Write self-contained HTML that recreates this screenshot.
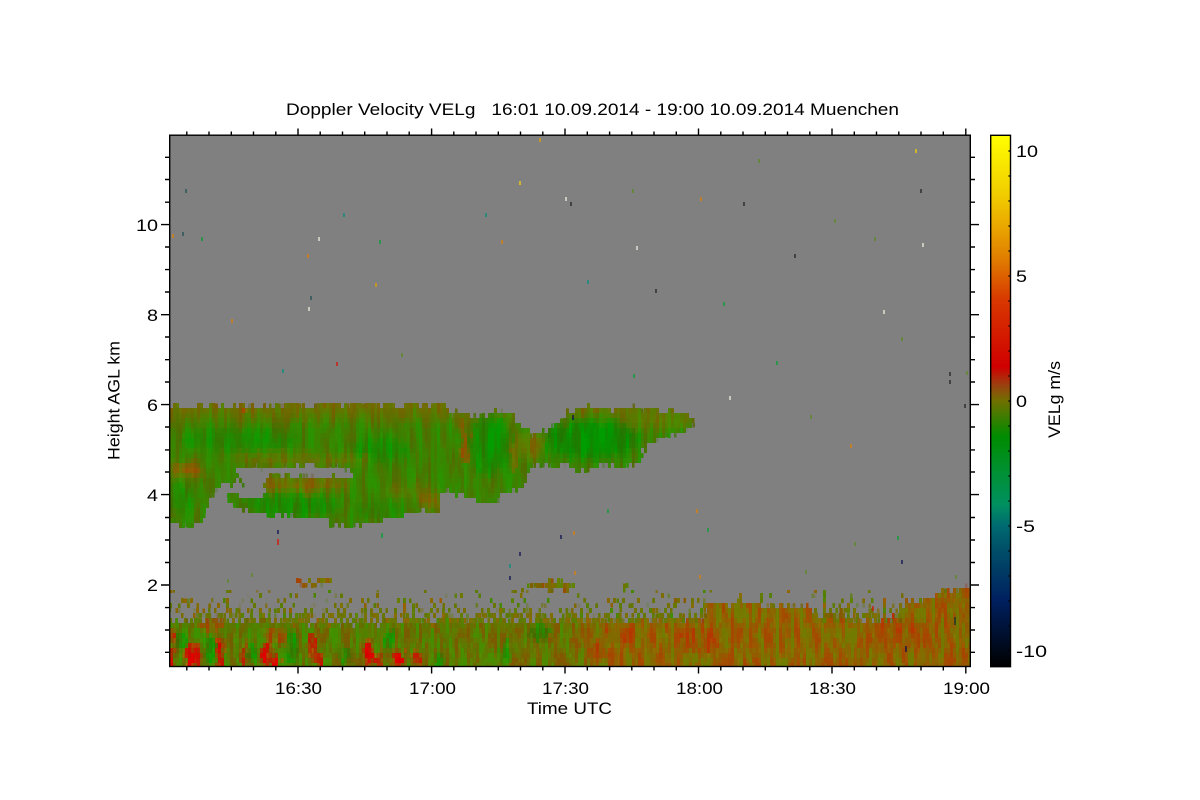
<!DOCTYPE html>
<html><head><meta charset="utf-8"><title>Doppler Velocity VELg</title>
<style>html,body{margin:0;padding:0;background:#fff}svg{display:block}
text{font-family:"Liberation Sans",sans-serif;font-size:17px;fill:#000}</style></head>
<body>
<svg width="1200" height="800" viewBox="0 0 1200 800" xmlns="http://www.w3.org/2000/svg">
<defs>
<clipPath id="plot"><rect x="170" y="135" width="800" height="531"/></clipPath>
<linearGradient id="cb" gradientUnits="userSpaceOnUse" x1="0" y1="135" x2="0" y2="667">
<stop offset="0" stop-color="#ffff00"/><stop offset=".122" stop-color="#f0c800"/><stop offset=".235" stop-color="#e07c00"/><stop offset=".31" stop-color="#d83800"/><stop offset=".436" stop-color="#d00000"/><stop offset=".47" stop-color="#9a4010"/><stop offset=".5" stop-color="#707000"/><stop offset=".566" stop-color="#008c00"/><stop offset=".63" stop-color="#009030"/><stop offset=".695" stop-color="#009060"/><stop offset=".735" stop-color="#006a70"/><stop offset=".78" stop-color="#004f68"/><stop offset=".874" stop-color="#002060"/><stop offset="1" stop-color="#000000"/>
</linearGradient>
<linearGradient id="bl" gradientUnits="userSpaceOnUse" x1="170" y1="0" x2="970" y2="0">
<stop offset="0" stop-color="#557800"/><stop offset=".17" stop-color="#5a7600"/><stop offset=".35" stop-color="#5e7400"/><stop offset=".49" stop-color="#687000"/><stop offset=".56" stop-color="#8c6000"/><stop offset=".8" stop-color="#8a6200"/><stop offset="1" stop-color="#8c5e00"/>
</linearGradient>
<linearGradient id="sp" gradientUnits="userSpaceOnUse" x1="0" y1="592" x2="0" y2="626">
<stop offset="0" stop-color="#000" stop-opacity="0"/><stop offset=".4" stop-color="#000" stop-opacity=".35"/><stop offset="1" stop-color="#000" stop-opacity="1"/>
</linearGradient>
<linearGradient id="topb" gradientUnits="userSpaceOnUse" x1="0" y1="403" x2="0" y2="428">
<stop offset="0" stop-color="#7a6800" stop-opacity=".9"/><stop offset="1" stop-color="#7a6800" stop-opacity="0"/>
</linearGradient>
<clipPath id="cloudclip"><polygon points="170,405 240,406 300,405 350,404 445,405 450,414 460,412 478,417 490,415 495,410 515,414 520,424 530,432 545,432 555,425 570,412 585,409 620,408 650,410 680,413 692,418 696,428 685,430 670,437 655,440 645,450 642,460 630,465 615,467 600,465 590,469 575,469 565,465 555,466 535,463 530,475 525,483 518,490 505,495 495,502 480,502 470,497 455,493 440,490 438,513 425,513 417,513 397,517 357,528 320,520 283,515 250,514 233,508 226,500 232,493 244,497 250,500 262,497 270,490 258,488 270,477 290,477 352,478 347,467 313,465 275,468 232,467 238,472 243,481 223,485 210,497 213,503 205,513 203,524 150,524 150,405"/></clipPath>
<filter id="soft" x="-30%" y="-30%" width="160%" height="160%"><feGaussianBlur stdDeviation="4"/></filter>
<filter id="soft2" x="-60%" y="-30%" width="220%" height="160%"><feGaussianBlur stdDeviation="1.2"/></filter>

<filter id="cloudF" filterUnits="userSpaceOnUse" x="150" y="390" width="570" height="150" color-interpolation-filters="sRGB">
<feTurbulence type="fractalNoise" baseFrequency="0.2 0.06" numOctaves="2" seed="4" result="jit"/>
<feDisplacementMap in="SourceGraphic" in2="jit" scale="14" xChannelSelector="R" yChannelSelector="G" result="disp"/>
<feTurbulence type="fractalNoise" baseFrequency="0.16 0.022" numOctaves="3" seed="11"/>
<feColorMatrix type="matrix" values="2.5 0 0 0 -.75  -2.5 0 0 0 1.75  0 0 0 0 0  0 0 0 0 1" result="noise"/>
<feComposite in="disp" in2="noise" operator="arithmetic" k1="0" k2="1" k3=".15" k4="-.075"/>
<feComposite in2="disp" operator="in" result="col"/>
<feFlood x="150" y="390" width="1" height="1" flood-color="#000" result="d"/>
<feComposite in="d" in2="d" x="150" y="390" width="3" height="5" operator="over"/>
<feTile x="150" y="390" width="570" height="150" result="tile"/>
<feComposite in="col" in2="tile" operator="in"/>
<feMorphology operator="dilate" radius="1 2"/>
</filter>

<filter id="blF" filterUnits="userSpaceOnUse" x="150" y="570" width="840" height="110" color-interpolation-filters="sRGB">
<feTurbulence type="fractalNoise" baseFrequency="0.25 0.08" numOctaves="2" seed="7" result="jit"/>
<feDisplacementMap in="SourceGraphic" in2="jit" scale="14" xChannelSelector="R" yChannelSelector="G" result="disp"/>
<feTurbulence type="fractalNoise" baseFrequency="0.2 0.04" numOctaves="3" seed="23"/>
<feColorMatrix type="matrix" values="3 0 0 0 -1  -3 0 0 0 2  0 0 0 0 0  0 0 0 0 1" result="noise"/>
<feComposite in="disp" in2="noise" operator="arithmetic" k1="0" k2="1" k3=".2" k4="-.1"/>
<feComposite in2="disp" operator="in" result="col"/>
<feFlood x="150" y="570" width="1" height="1" flood-color="#000" result="d"/>
<feComposite in="d" in2="d" x="150" y="570" width="3" height="5" operator="over"/>
<feTile x="150" y="570" width="840" height="110" result="tile"/>
<feComposite in="col" in2="tile" operator="in"/>
<feMorphology operator="dilate" radius="1 2"/>
</filter>

<filter id="spF" filterUnits="userSpaceOnUse" x="170" y="590" width="800" height="46" color-interpolation-filters="sRGB">
<feTurbulence type="fractalNoise" baseFrequency="0.3 0.18" numOctaves="2" seed="31" result="t"/>
<feColorMatrix in="t" type="matrix" values="0 0 0 0 0  0 0 0 0 0  0 0 0 0 0  1 0 0 0 0" result="na"/>
<feComposite in="SourceAlpha" in2="na" operator="arithmetic" k1="0" k2=".3" k3="1" k4="0"/>
<feComponentTransfer result="mask"><feFuncA type="linear" slope="40" intercept="-28"/></feComponentTransfer>
<feColorMatrix in="t" type="matrix" values="0 .6 0 0 .12  0 -.3 0 0 .6  0 0 0 0 0  0 0 0 0 1"/>
<feComposite in2="mask" operator="in" result="col"/>
<feFlood x="170" y="590" width="1" height="1" flood-color="#000" result="d"/>
<feComposite in="d" in2="d" x="170" y="590" width="3" height="5" operator="over"/>
<feTile x="170" y="590" width="800" height="46" result="tile"/>
<feComposite in="col" in2="tile" operator="in"/>
<feMorphology operator="dilate" radius="1 2"/>
</filter>
</defs>

<rect width="1200" height="800" fill="#fff"/>
<rect x="170" y="135" width="800" height="531" fill="#808080"/>

<g clip-path="url(#plot)">
  <g filter="url(#spF)"><rect x="170" y="590" width="800" height="46" fill="url(#sp)"/></g>

  <g filter="url(#blF)">
    <polygon fill="url(#bl)" points="150,622 280,622 300,625 430,625 450,623 570,623 700,621 707,618 707,603 760,603 760,608 815,605 815,620 900,622 902,603 920,601 935,597 947,590 972,586 990,586 990,690 150,690"/>
    <polygon fill="#8a5e00" points="293,579 310,579 330,581 330,584 293,585"/>
    <polygon fill="#7a6800" points="543,582 560,582 575,586 575,590 557,590 543,587"/>
    <polygon fill="#6a7000" points="523,585 540,585 540,588 523,588"/>
    <polygon fill="#6a7000" points="620,585 627,585 627,590 620,590"/>
    <polygon fill="#805f00" points="675,600 682,600 682,604 675,604"/>
    <rect x="826" y="612" width="20" height="7" fill="#6a7000"/>
    <g filter="url(#soft2)" fill="#c80800">
      <ellipse cx="172" cy="650" rx="3" ry="20"/><ellipse cx="190" cy="655" rx="5" ry="14"/><ellipse cx="198" cy="656" rx="3" ry="12"/>
      <ellipse cx="220" cy="655" rx="4" ry="15"/><ellipse cx="243" cy="656" rx="2" ry="12"/><ellipse cx="266" cy="656" rx="6" ry="12"/><ellipse cx="275" cy="662" rx="4" ry="6"/>
      <ellipse cx="312" cy="645" rx="4" ry="15"/><ellipse cx="320" cy="660" rx="5" ry="9"/><ellipse cx="368" cy="653" rx="5" ry="14"/><ellipse cx="378" cy="660" rx="4" ry="7"/>
      <ellipse cx="398" cy="660" rx="6" ry="9"/><ellipse cx="417" cy="660" rx="4" ry="8"/>
    </g>
    <g filter="url(#soft2)" fill="#128800" opacity=".75">
      <ellipse cx="210" cy="650" rx="5" ry="14"/><ellipse cx="292" cy="648" rx="6" ry="18"/><ellipse cx="345" cy="655" rx="5" ry="10"/><ellipse cx="440" cy="660" rx="5" ry="8"/>
      <ellipse cx="540" cy="632" rx="10" ry="8"/><ellipse cx="506" cy="650" rx="5" ry="12"/><ellipse cx="180" cy="640" rx="5" ry="8"/><ellipse cx="252" cy="652" rx="5" ry="10"/><ellipse cx="390" cy="640" rx="5" ry="10"/>
    </g>
    <g filter="url(#soft2)" fill="#a04800" opacity=".7">
      <ellipse cx="700" cy="640" rx="22" ry="14"/><ellipse cx="620" cy="635" rx="20" ry="9"/><ellipse cx="210" cy="625" rx="14" ry="7"/><ellipse cx="275" cy="635" rx="12" ry="8"/><ellipse cx="900" cy="625" rx="26" ry="6"/><ellipse cx="600" cy="650" rx="12" ry="10"/>
    </g>
  </g>

  <g filter="url(#cloudF)">
    <g clip-path="url(#cloudclip)">
      <rect x="150" y="395" width="560" height="140" fill="#3c8000"/>
      <rect x="150" y="403" width="560" height="26" fill="url(#topb)"/>
      <g filter="url(#soft)">
        <ellipse cx="590" cy="440" rx="50" ry="20" fill="#0c8a00"/>
        <ellipse cx="490" cy="445" rx="20" ry="30" fill="#128a00"/>
        <ellipse cx="240" cy="440" rx="60" ry="12" fill="#228600"/>
        <ellipse cx="380" cy="450" rx="30" ry="14" fill="#1c8800"/>
        <ellipse cx="290" cy="505" rx="50" ry="12" fill="#1e8800"/>
        <ellipse cx="380" cy="510" rx="26" ry="10" fill="#2a8400"/>
        <ellipse cx="182" cy="497" rx="14" ry="18" fill="#288600"/>
        <ellipse cx="660" cy="420" rx="32" ry="8" fill="#5f7800"/>
        <ellipse cx="300" cy="484" rx="52" ry="6" fill="#7c6800"/>
        <ellipse cx="185" cy="470" rx="16" ry="7" fill="#8c5e00"/>
        <ellipse cx="300" cy="460" rx="70" ry="5" fill="#687200"/>
        <ellipse cx="430" cy="500" rx="10" ry="12" fill="#826000"/>
        <ellipse cx="530" cy="445" rx="14" ry="14" fill="#6a7000"/>
        <ellipse cx="410" cy="490" rx="26" ry="6" fill="#5a7400"/>
      </g>
      <g filter="url(#soft2)">
        <ellipse cx="465" cy="449" rx="3.5" ry="14" fill="#964c00"/>
        <ellipse cx="465" cy="430" rx="3" ry="14" fill="#7a6200"/>
        <ellipse cx="515" cy="458" rx="3" ry="14" fill="#806000"/>
        <rect x="243" y="405" width="4" height="6" fill="#b04000"/>
      </g>
    </g>
  </g>

  <g fill="none" stroke-width="1.3">
    <path stroke="#e8a000" d="M540 138v4M376 283v4"/>
    <path stroke="#f4d400" d="M916 149v4M520 181v4"/>
    <path stroke="#f0f0e0" d="M566 197v4M319 237v4M637 246v4M923 243v4M309 307v4M884 310v4M730 396v4"/>
    <path stroke="#202020" d="M571 202v4M744 202v4M921 189v4M795 254v4M656 289v4M950 372v4M950 380v4M965 404v4"/>
    <path stroke="#1c5050" d="M186 189v4M183 232v4M311 296v4"/>
    <path stroke="#00907a" d="M344 213v4M486 213v4M588 280v4M283 369v4M510 564v4"/>
    <path stroke="#5c8a20" d="M759 159v4M633 189v4M835 219v4M875 237v4M902 337v4M402 353v4M811 415v4M855 542v4M806 570v4M252 573v4M228 579v4M956 575v4M967 371v4"/>
    <path stroke="#00a030" d="M202 237v4M380 240v4M724 302v4M777 361v4M634 374v4M608 509v4M708 528v4M382 533v5M898 536v4"/>
    <path stroke="#e08000" d="M701 197v4M173 234v4M502 240v4M308 254v4M232 319v4M851 444v4M697 509v4M574 531v4M700 575v4M575 571v4"/>
    <path stroke="#d81000" d="M337 362v4M278 539v6M873 606v5M893 613v6"/>
    <path stroke="#0c0c50" d="M573 415v5M278 530v4M561 535v4M520 552v4M902 560v4M510 576v4M906 646v6"/>
    <path stroke="#103030" d="M955 617v8"/>
  </g>
</g>

<!-- axes -->
<g fill="none" stroke="#000" stroke-width="1.4">
<rect x="169.7" y="135.2" width="800.6" height="531.3"/>
<path d="M186.8 135v-3.5M209 135v-3.5M231.3 135v-3.5M253.5 135v-3.5M275.8 135v-3.5M298 135v-6.5M320.2 135v-3.5M342.5 135v-3.5M364.7 135v-3.5M387 135v-3.5M409.2 135v-3.5M431.6 135v-6.5M453.8 135v-3.5M476 135v-3.5M498.3 135v-3.5M520.5 135v-3.5M542.8 135v-3.5M565 135v-6.5M587.3 135v-3.5M609.6 135v-3.5M631.8 135v-3.5M654 135v-3.5M676.3 135v-3.5M698.5 135v-6.5M720.8 135v-3.5M743 135v-3.5M765.3 135v-3.5M787.5 135v-3.5M809.8 135v-3.5M832 135v-6.5M854.3 135v-3.5M876.5 135v-3.5M898.8 135v-3.5M921 135v-3.5M943.3 135v-3.5M965.8 135v-6.5"/>
<path d="M186.8 667v3.5M209 667v3.5M231.3 667v3.5M253.5 667v3.5M275.8 667v3.5M298 667v6.5M320.2 667v3.5M342.5 667v3.5M364.7 667v3.5M387 667v3.5M409.2 667v3.5M431.6 667v6.5M453.8 667v3.5M476 667v3.5M498.3 667v3.5M520.5 667v3.5M542.8 667v3.5M565 667v6.5M587.3 667v3.5M609.6 667v3.5M631.8 667v3.5M654 667v3.5M676.3 667v3.5M698.5 667v6.5M720.8 667v3.5M743 667v3.5M765.3 667v3.5M787.5 667v3.5M809.8 667v3.5M832 667v6.5M854.3 667v3.5M876.5 667v3.5M898.8 667v3.5M921 667v3.5M943.3 667v3.5M965.8 667v6.5"/>
<path d="M169 157.3h-4M169 179.5h-4M169 202.2h-4M169 224.6h-8M169 247h-4M169 269.6h-4M169 292h-4M169 314.7h-8M169 337h-4M169 359.7h-4M169 382h-4M169 404.6h-8M169 427h-4M169 449.9h-4M169 472h-4M169 494.6h-8M169 517.5h-4M169 540h-4M169 562.5h-4M169 585h-8M169 607.6h-4M169 630h-4M169 652.3h-4"/>
<path d="M971 157.3h4M971 179.5h4M971 202.2h4M971 224.6h8M971 247h4M971 269.6h4M971 292h4M971 314.7h8M971 337h4M971 359.7h4M971 382h4M971 404.6h8M971 427h4M971 449.9h4M971 472h4M971 494.6h8M971 517.5h4M971 540h4M971 562.5h4M971 585h8M971 607.6h4M971 630h4M971 652.3h4"/>
</g>

<!-- colour bar -->
<rect x="990.7" y="135.3" width="19.8" height="531.4" fill="url(#cb)" stroke="#000" stroke-width="1.4"/>
<path fill="none" stroke="#000" stroke-width="1.2" d="M1010 151h-1.6M1010 176h-1.6M1010 201h-1.6M1010 226h-1.6M1010 251h-1.6M1010 276h-1.6M1010 301h-1.6M1010 326h-1.6M1010 351h-1.6M1010 376h-1.6M1010 401h-1.6M1010 426h-1.6M1010 451h-1.6M1010 476h-1.6M1010 501h-1.6M1010 526h-1.6M1010 551h-1.6M1010 576h-1.6M1010 601h-1.6M1010 626h-1.6M1010 651h-1.6"/>

<!-- text -->
<text x="286" y="115" textLength="613" lengthAdjust="spacingAndGlyphs">Doppler Velocity VELg&#160;&#160;&#160;16:01 10.09.2014 - 19:00 10.09.2014 Muenchen</text>
<text x="275" y="694" textLength="47" lengthAdjust="spacingAndGlyphs">16:30</text>
<text x="409" y="694" textLength="47" lengthAdjust="spacingAndGlyphs">17:00</text>
<text x="542" y="694" textLength="47" lengthAdjust="spacingAndGlyphs">17:30</text>
<text x="676" y="694" textLength="47" lengthAdjust="spacingAndGlyphs">18:00</text>
<text x="809" y="694" textLength="47" lengthAdjust="spacingAndGlyphs">18:30</text>
<text x="943" y="694" textLength="47" lengthAdjust="spacingAndGlyphs">19:00</text>
<text x="527" y="714" textLength="85" lengthAdjust="spacingAndGlyphs">Time UTC</text>
<text x="136" y="231" textLength="22" lengthAdjust="spacingAndGlyphs">10</text>
<text x="147" y="321" textLength="11" lengthAdjust="spacingAndGlyphs">8</text>
<text x="147" y="411" textLength="11" lengthAdjust="spacingAndGlyphs">6</text>
<text x="147" y="501" textLength="11" lengthAdjust="spacingAndGlyphs">4</text>
<text x="147" y="591" textLength="11" lengthAdjust="spacingAndGlyphs">2</text>
<text transform="translate(119.5 460) rotate(-90)" textLength="119" lengthAdjust="spacingAndGlyphs">Height AGL km</text>
<text x="1016" y="157" textLength="22" lengthAdjust="spacingAndGlyphs">10</text>
<text x="1016" y="282" textLength="11" lengthAdjust="spacingAndGlyphs">5</text>
<text x="1016" y="407" textLength="11" lengthAdjust="spacingAndGlyphs">0</text>
<text x="1016" y="532" textLength="19" lengthAdjust="spacingAndGlyphs">-5</text>
<text x="1016" y="657" textLength="31" lengthAdjust="spacingAndGlyphs">-10</text>
<text transform="translate(1060 438) rotate(-90)" textLength="77" lengthAdjust="spacingAndGlyphs">VELg m/s</text>
</svg>
</body></html>
